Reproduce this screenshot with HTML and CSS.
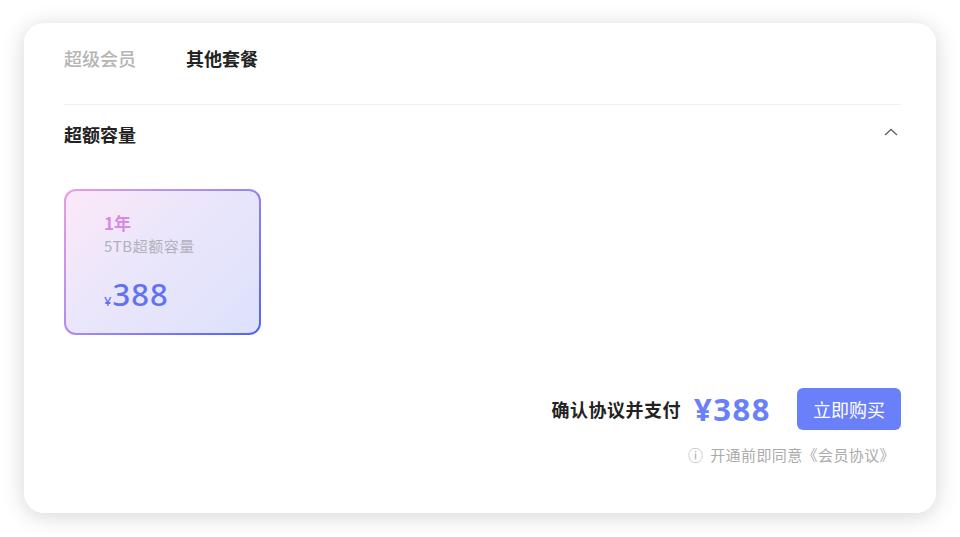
FILE: index.html
```html
<!DOCTYPE html>
<html lang="zh-CN">
<head>
    <meta charset="UTF-8">
    <meta name="viewport" content="width=device-width, initial-scale=1.0">
    <title>其他套餐</title>
    <link rel="stylesheet" href="styles.css">
</head>
<body>
    <div class="panel">
        <div class="tabs">
            <span class="tab">超级会员</span>
            <span class="tab active">其他套餐</span>
        </div>

        <div class="section-head">
            <h3>超额容量</h3>
            <svg class="chevron" width="14" height="8" viewBox="0 0 14 8">
                <path d="M1 7 L7 1.5 L13 7" fill="none" stroke="#666" stroke-width="1.4"/>
            </svg>
        </div>

        <div class="plans">
            <div class="plan selected">
                <div class="plan-term">1年</div>
                <div class="plan-desc">5TB超额容量</div>
                <div class="plan-price"><span class="yen">¥</span>388</div>
            </div>
        </div>

        <div class="pay">
            <div class="pay-row">
                <span class="pay-label">确认协议并支付</span>
                <span class="pay-total">¥388</span>
                <button type="button" class="buy">立即购买</button>
            </div>
            <div class="agree">
                <span class="info">ⓘ</span> 开通前即同意《会员协议》
            </div>
        </div>
    </div>
</body>
</html>
```

FILE: styles.css
```css
body {
    margin: 0;
    padding: 23px 24px 24px;
    background: #ffffff;
    font-family: "Noto Sans CJK SC", "Noto Sans", sans-serif;
}
.panel {
    width: 912px;
    height: 490px;
    padding: 0 35px 0 40px;
    box-sizing: border-box;
    background: #ffffff;
    border-radius: 20px;
    box-shadow: 0 3px 22px rgba(0, 0, 0, 0.17);
}
.tabs {
    display: flex;
    gap: 50px;
    height: 82px;
    padding-top: 24px;
    box-sizing: border-box;
    border-bottom: 1px solid #f0f0f0;
}
.tab {
    font-size: 18px;
    line-height: 22px;
    color: #b5b5b5;
    font-weight: 500;
}
.tab.active {
    color: #222;
    font-weight: 700;
}
.section-head {
    display: flex;
    align-items: center;
    justify-content: space-between;
    height: 58px;
}
.section-head h3 {
    margin: 0;
    font-size: 18px;
    font-weight: 700;
    color: #222;
}
.chevron {
    margin-right: 3px;
    margin-top: -4px;
}
.plans {
    display: flex;
    margin-top: 26px;
}
.plan {
    width: 197px;
    height: 146px;
    box-sizing: border-box;
    padding: 20px 0 0 38px;
    border: 2px solid transparent;
    border-radius: 12px;
    background:
        linear-gradient(135deg, #fbe9f8 0%, #eae6fb 45%, #dde1fc 100%) padding-box,
        linear-gradient(135deg, #ea9ee4 0%, #a88cf0 45%, #4d63f6 100%) border-box;
}
.plan-term {
    font-size: 17px;
    line-height: 24px;
    font-weight: 700;
    color: #d88ae0;
}
.plan-desc {
    font-size: 15px;
    line-height: 20px;
    color: #b2b0bd;
    margin-top: 1px;
    letter-spacing: 0.5px;
}
.plan-price {
    margin-top: 20px;
    font-family: "Noto Sans", sans-serif;
    font-size: 31px;
    line-height: 36px;
    font-weight: 500;
    letter-spacing: 1px;
    color: #6072f2;
}
.yen {
    font-size: 13px;
    margin-right: 1px;
    letter-spacing: 0;
}
.pay {
    margin-top: 53px;
    display: flex;
    flex-direction: column;
    align-items: flex-end;
}
.pay-row {
    display: flex;
    align-items: center;
}
.pay-label {
    font-size: 18px;
    font-weight: 700;
    color: #222;
    letter-spacing: 0.5px;
}
.pay-total {
    margin-left: 13px;
    font-family: "Noto Sans", sans-serif;
    font-size: 31px;
    font-weight: 700;
    letter-spacing: 1.5px;
    color: #6a80f8;
}
.buy {
    margin-left: 26px;
    width: 104px;
    height: 42px;
    border: none;
    border-radius: 6px;
    background: #6a80fa;
    color: #ffffff;
    font-family: inherit;
    font-size: 18px;
    cursor: pointer;
}
.agree {
    margin-top: 14px;
    margin-right: 6px;
    font-size: 15px;
    line-height: 22px;
    color: #ababab;
    letter-spacing: 0.4px;
}
.info {
    margin-right: 3px;
}
```
